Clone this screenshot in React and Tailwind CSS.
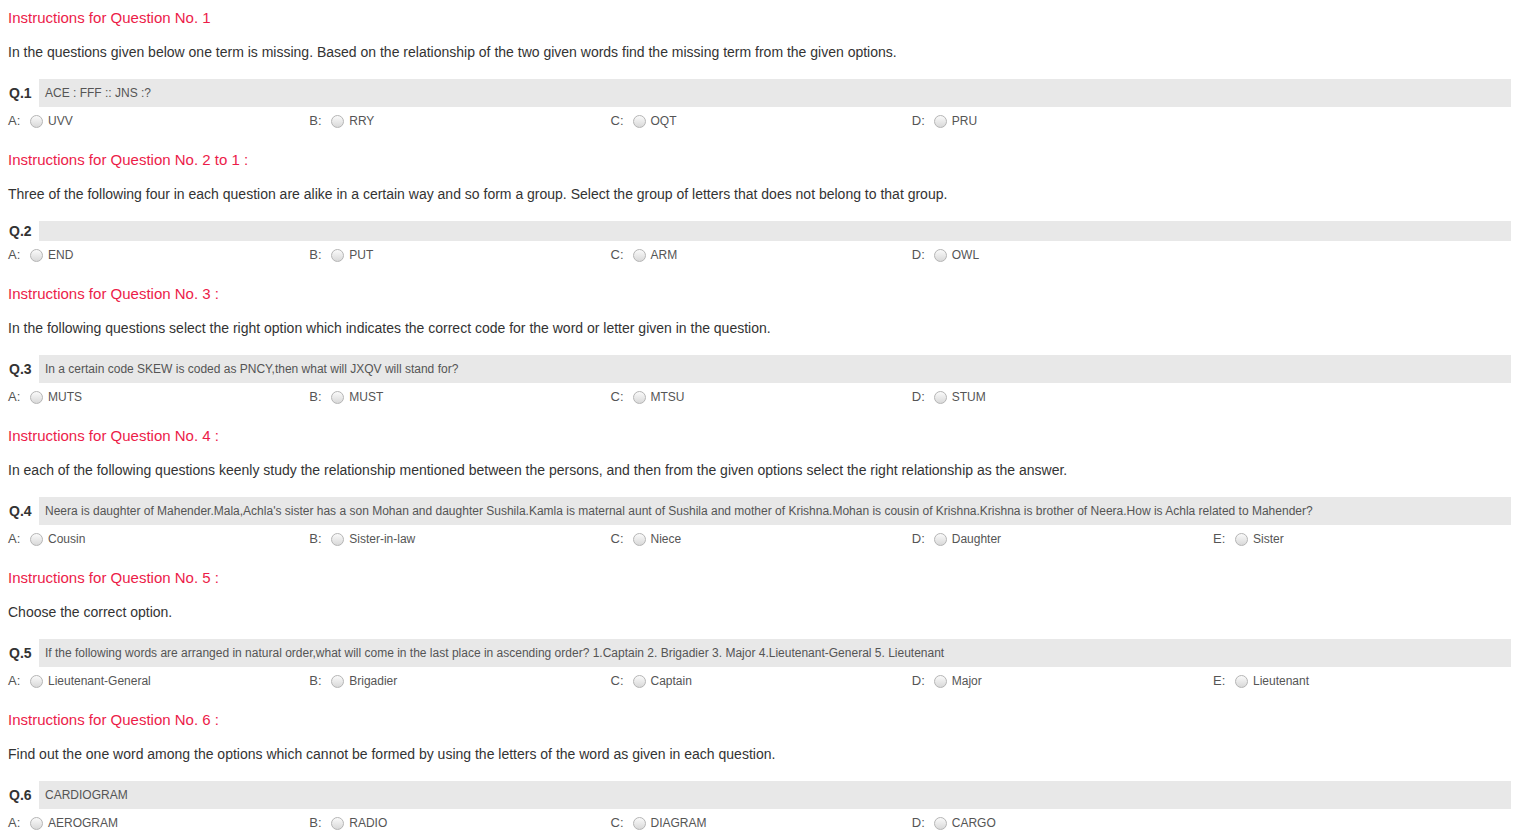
import React from 'react';

const sections = [
  {
    title: 'Instructions for Question No. 1',
    text: 'In the questions given below one term is missing. Based on the relationship of the two given words find the missing term from the given options.',
    q: 'Q.1',
    question: 'ACE : FFF :: JNS :?',
    options: ['UVV', 'RRY', 'OQT', 'PRU'],
  },
  {
    title: 'Instructions for Question No. 2 to 1 :',
    text: 'Three of the following four in each question are alike in a certain way and so form a group. Select the group of letters that does not belong to that group.',
    q: 'Q.2',
    question: '',
    options: ['END', 'PUT', 'ARM', 'OWL'],
  },
  {
    title: 'Instructions for Question No. 3 :',
    text: 'In the following questions select the right option which indicates the correct code for the word or letter given in the question.',
    q: 'Q.3',
    question: 'In a certain code SKEW is coded as PNCY,then what will JXQV will stand for?',
    options: ['MUTS', 'MUST', 'MTSU', 'STUM'],
  },
  {
    title: 'Instructions for Question No. 4 :',
    text: 'In each of the following questions keenly study the relationship mentioned between the persons, and then from the given options select the right relationship as the answer.',
    q: 'Q.4',
    question: "Neera is daughter of Mahender.Mala,Achla's sister has a son Mohan and daughter Sushila.Kamla is maternal aunt of Sushila and mother of Krishna.Mohan is cousin of Krishna.Krishna is brother of Neera.How is Achla related to Mahender?",
    options: ['Cousin', 'Sister-in-law', 'Niece', 'Daughter', 'Sister'],
  },
  {
    title: 'Instructions for Question No. 5 :',
    text: 'Choose the correct option.',
    q: 'Q.5',
    question: 'If the following words are arranged in natural order,what will come in the last place in ascending order? 1.Captain 2. Brigadier 3. Major 4.Lieutenant-General 5. Lieutenant',
    options: ['Lieutenant-General', 'Brigadier', 'Captain', 'Major', 'Lieutenant'],
  },
  {
    title: 'Instructions for Question No. 6 :',
    text: 'Find out the one word among the options which cannot be formed by using the letters of the word as given in each question.',
    q: 'Q.6',
    question: 'CARDIOGRAM',
    options: ['AEROGRAM', 'RADIO', 'DIAGRAM', 'CARGO'],
  },
];

const letters = ['A', 'B', 'C', 'D', 'E'];

const Radio = () => (
  <span className="inline-block w-[13px] h-[13px] rounded-full border border-[#b5b5b5] bg-gradient-to-b from-[#fafafa] to-[#d9d9d9] shrink-0" />
);

const Section = ({ s }) => (
  <div className="pt-[8px] pb-[9px]">
    <div className="text-[15px] leading-[20px] text-[#ec1c49]">{s.title}</div>
    <p className="mt-[14px] text-[14px] leading-[20px] text-[#333]">{s.text}</p>
    <div className="mt-[17px] flex items-center">
      <span className="w-[31px] pl-px text-[14px] leading-[18px] font-bold text-[#333]">{s.q}</span>
      <div className={`flex-1 bg-[#e8e8e8] px-[6px] flex items-center text-[12px] leading-[16px] text-[#555] ${s.question ? 'h-[28px]' : 'h-[20px]'}`}>
        {s.question}
      </div>
    </div>
    <div className="grid grid-cols-[repeat(5,301.25px)] h-[26px] pt-[2px] items-center">
      {s.options.map((o, i) => (
        <div key={i} className="flex items-center">
          <span className="text-[13px] text-[#555] w-[22px]">{letters[i]}:</span>
          <Radio />
          <span className="ml-[5px] text-[12px] text-[#555]">{o}</span>
        </div>
      ))}
    </div>
  </div>
);

export default function App() {
  return (
    <div className="bg-white px-[8px] font-['Liberation_Sans',Arial,sans-serif] min-h-[830px]">
      {sections.map((s, i) => (
        <Section key={i} s={s} />
      ))}
    </div>
  );
}
